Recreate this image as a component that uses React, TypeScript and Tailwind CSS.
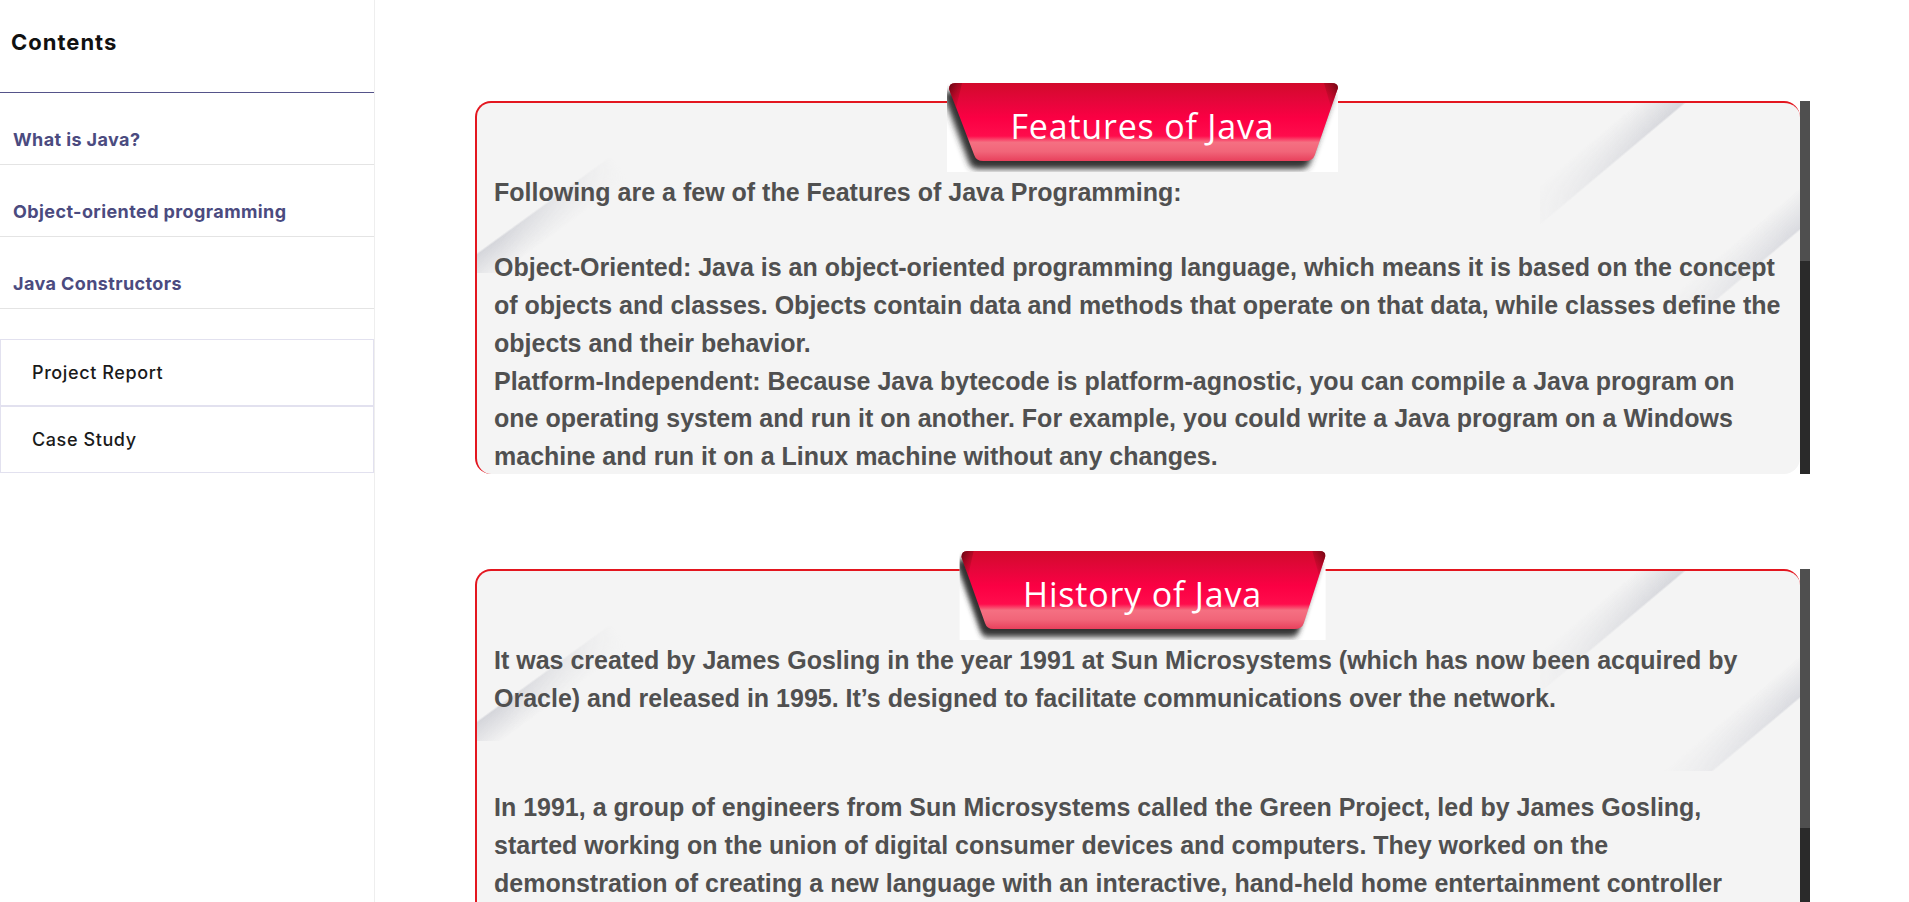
import React from 'react';

const links = ['What is Java?', 'Object-oriented programming', 'Java Constructors'];

const Ribbon: React.FC<{ title: string; id: string }> = ({ title, id }) => (
  <div className="absolute left-1/2 -top-[18px] z-10 h-[89px] -translate-x-1/2 bg-white px-[64px]">
    <svg className="absolute inset-0 h-full w-full" viewBox="0 0 390 89" preserveAspectRatio="none">
      <defs>
        <linearGradient id={`${id}-body`} x1="0" y1="0" x2="0" y2="78" gradientUnits="userSpaceOnUse">
          <stop offset="0" stopColor="#d20a2b" />
          <stop offset="0.22" stopColor="#e4063a" />
          <stop offset="0.45" stopColor="#fb0043" />
          <stop offset="0.68" stopColor="#ff0c4c" />
          <stop offset="0.76" stopColor="#f57082" />
          <stop offset="0.88" stopColor="#f16579" />
          <stop offset="1" stopColor="#e8405c" />
        </linearGradient>
        <linearGradient id={`${id}-curl-l`} x1="0" y1="0" x2="1" y2="1">
          <stop offset="0" stopColor="#5e0610" />
          <stop offset="1" stopColor="#c40a26" stopOpacity="0" />
        </linearGradient>
        <linearGradient id={`${id}-curl-r`} x1="1" y1="0" x2="0" y2="1">
          <stop offset="0" stopColor="#6a0712" />
          <stop offset="1" stopColor="#c40a26" stopOpacity="0" />
        </linearGradient>
        <filter id={`${id}-blur`} x="-10%" y="-10%" width="120%" height="140%">
          <feGaussianBlur stdDeviation="3" />
        </filter>
      </defs>
      {/* shadow */}
      <path
        d="M -3 14 Q -3 8 3 8 L 377 8 Q 384 8 384 13 L 361 80 Q 359 86 351 86 L 31 86 Q 24 86 22 80 Z"
        fill="#333333"
        filter={`url(#${id}-blur)`}
      />
      {/* body */}
      <path
        d="M 2 6 Q 2 0 8 0 L 382 0 Q 389 0 389 5 L 366 72 Q 364 78 356 78 L 36 78 Q 29 78 27 72 Z"
        fill={`url(#${id}-body)`}
      />
      {/* folds */}
      <path d="M 2 6 Q 2 0 8 0 L 15 0 L 9 25 Z" fill={`url(#${id}-curl-l)`} />
      <path d="M 389 5 Q 389 0 383 0 L 375 0 L 382 24 Z" fill={`url(#${id}-curl-r)`} />
    </svg>
    <span className="relative block whitespace-nowrap pt-[26px] text-[34px] leading-[34px] tracking-[0.8px] text-white [font-family:'Open_Sans',sans-serif]">
      {title}
    </span>
  </div>
);

const Card: React.FC<{ title: string; id: string; thumb: string; children: React.ReactNode }> = ({
  title,
  id,
  thumb,
  children,
}) => (
  <section className="relative flex h-[373px] shrink-0">
    <Ribbon title={title} id={id} />
    <div className="relative flex-1 overflow-hidden rounded-[16px] border-l-2 border-t-2 border-[#e3161f] bg-[#f4f4f4]">
      {/* paper shine */}
      <div className="pointer-events-none absolute left-0 top-0 h-[170px] w-[170px] bg-[linear-gradient(144deg,transparent_121px,#d5d6db_123px,rgba(222,223,228,0)_152px)] [mask-image:linear-gradient(54deg,#000_15%,transparent_75%)]" />
      <div className="pointer-events-none absolute right-0 top-0 h-[200px] w-[260px] bg-[linear-gradient(140deg,transparent_62px,#d6d7dc_92px,transparent_94px,transparent_232px,#dadbe0_263px,transparent_265px)] [mask-image:linear-gradient(225deg,#000_30%,transparent_85%)]" />
      <div className="relative pl-[17px] pr-[17px] pt-[71px] text-[25px] font-bold leading-[37.7px] text-[#505050] [font-family:'Liberation_Sans',Arial,sans-serif]">
        {children}
      </div>
    </div>
    <div className="flex w-[10px] flex-col bg-[#2a2a2a]">
      <div className={thumb + ' bg-[#4f4f4f]'} />
    </div>
  </section>
);

export default function App() {
  return (
    <div className="flex h-screen overflow-hidden bg-white">
      <aside className="w-[375px] shrink-0 border-r border-[#eeeeee] [font-family:Inter,sans-serif]">
        <div className="h-[93px] border-b border-[#55548a] pl-[11px] pt-[31px] text-[22px] font-bold leading-[22px] tracking-[1px] text-[#111111]">
          Contents
        </div>
        <nav>
          {links.map((l) => (
            <a
              key={l}
              href="#"
              className="block border-b border-[#e4e4e4] pl-[13px] pb-[13px] pt-[36px] text-[18px] font-bold leading-[22px] tracking-[0.4px] text-[#4b4b7f]"
            >
              {l}
            </a>
          ))}
        </nav>
        <ul className="mt-[30px] border border-[#e2e1ef] text-[18px] font-medium tracking-[0.6px] text-[#1a1a1a]">
          <li className="flex h-[67px] items-center border-b-2 border-[#e2e1ef] pl-[31px]">Project Report</li>
          <li className="flex h-[65px] items-center pl-[31px]">Case Study</li>
        </ul>
      </aside>

      <main className="flex flex-1 flex-col gap-[95px] overflow-hidden pl-[100px] pr-[99px] pt-[101px]">
        <Card title="Features of Java" id="features" thumb="h-[160px]">
          <p>
            Following are a few of the Features of Java Programming:
            <br />
            <br />
            Object-Oriented: Java is an object-oriented programming language, which means it is based on the concept of
            objects and classes. Objects contain data and methods that operate on that data, while classes define the
            objects and their behavior.
            <br />
            Platform-Independent: Because Java bytecode is platform-agnostic, you can compile a Java program on one
            operating system and run it on another. For example, you could write a Java program on a Windows machine and
            run it on a Linux machine without any changes.
            <br />
            Simple: Java has a clean syntax that is easy to learn, and it removes complex features such as explicit
            pointers and operator overloading.
          </p>
        </Card>

        <Card title="History of Java" id="history" thumb="h-[259px]">
          <p>
            It was created by James Gosling in the year 1991 at Sun Microsystems (which has now been acquired by
            Oracle) and released in 1995. It’s designed to facilitate communications over the network.
          </p>
          <p className="mt-[72px]">
            In 1991, a group of engineers from Sun Microsystems called the Green Project, led by James Gosling, started
            working on the union of digital consumer devices and computers. They worked on the demonstration of creating
            a new language with an interactive, hand-held home entertainment controller which was originally targeted at
            the digital cable television industry.
          </p>
        </Card>
      </main>
    </div>
  );
}
